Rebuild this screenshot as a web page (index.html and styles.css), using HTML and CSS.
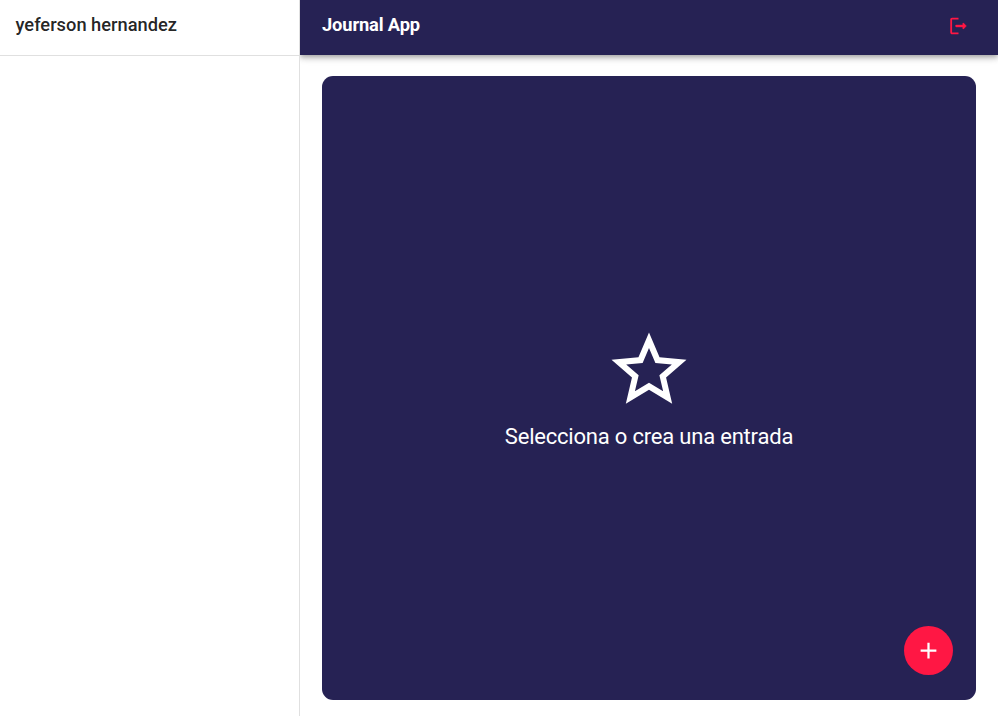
FILE: index.html
```html
<!DOCTYPE html>
<html lang="es">
<head>
<meta charset="utf-8">
<title>Journal App</title>
<link rel="stylesheet" href="styles.css">
</head>
<body>
<div class="app">
  <aside class="sidebar">
    <div class="sidebar-header"><h2 class="user-name">yeferson hernandez</h2></div>
  </aside>
  <div class="content">
    <header class="app-bar">
      <h1 class="title">Journal App</h1>
      <button class="logout" aria-label="Salir">
        <svg viewBox="0 0 24 24"><path d="M5 5h7V3H5c-1.100 0-2 .9-2 2v14c0 1.100.9 2 2 2h7v-2H5V5z"/><path class="arrow" d="m20.300 11.650-2.790-2.790c-.32-.32-.86-.1-.86.35V11h-7c-.55 0-1 .45-1 1s.45 1 1 1h7v1.790c0 .45.540.67.850.35l2.790-2.790c.2-.19.2-.51.010-.7z"/></svg>
      </button>
    </header>
    <main class="main">
      <section class="empty">
        <svg class="star" viewBox="0 0 24 24"><path d="m22 9.240-7.190-.62L12 2 9.190 8.630 2 9.240l5.460 4.730L5.820 21 12 17.270 18.180 21l-1.630-7.030L22 9.240zM12 15.400l-3.760 2.270 1-4.280-3.320-2.880 4.380-.38L12 6.100l1.710 4.040 4.380.38-3.320 2.880 1 4.280L12 15.400z"/></svg>
        <p class="message">Selecciona o crea una entrada</p>
      </section>
    </main>
  </div>
  <button class="fab" aria-label="Nueva entrada">
    <svg viewBox="0 0 24 24"><path d="M19 13h-6v6h-2v-6H5v-2h6V5h2v6h6v2z"/></svg>
  </button>
</div>
</body>
</html>
```
FILE: styles.css
```css
* { box-sizing: border-box; }
body { margin: 0; font-family: Roboto, sans-serif; background: #fff; }
h1, h2, p { margin: 0; }
button { border: 0; padding: 0; cursor: pointer; }
svg { display: block; fill: currentColor; }
.app { display: flex; height: 100vh; overflow: hidden; }
.sidebar { flex: 0 0 300px; border-right: 1px solid #e0e0e0; }
.sidebar-header { height: 56px; padding: 10px 15.500px; border-bottom: 1px solid #e0e0e0; }
.user-name { font-size: 18.300px; line-height: 29px; font-weight: 500; letter-spacing: 0; color: rgba(0,0,0,.87); }
.content { flex: 1; display: flex; flex-direction: column; overflow: hidden; }
.app-bar { flex: 0 0 55px; display: flex; align-items: flex-start; justify-content: space-between; padding: 10px 29px 0 22px; background: #262254; color: #fff; box-shadow: 0 2px 4px -1px rgba(0,0,0,.2), 0 4px 5px rgba(0,0,0,.14), 0 1px 10px rgba(0,0,0,.12); }
.title { font-size: 18.300px; line-height: 29px; font-weight: 700; letter-spacing: -.13px; }
.logout { background: none; color: #ff1744; margin-top: 5px; }
.logout svg { width: 22px; height: 22px; transform: translateX(.5px); }
.arrow { stroke: currentColor; stroke-width: .5; }
.main { flex: 1; display: flex; padding: 21px 22px 16px; }
.empty { flex: 1; display: flex; flex-direction: column; align-items: center; justify-content: center; gap: 7px; padding-top: 1px; background: #262254; border-radius: 11px; color: #fff; }
.star { width: 90px; height: 90px; }
.message { font-size: 22px; line-height: 30px; letter-spacing: -.2px; }
.fab { position: absolute; right: 45px; bottom: 41px; width: 49px; height: 49px; border-radius: 50%; background: #ff1744; color: #fff; display: flex; align-items: center; justify-content: center; }
.fab svg { width: 27px; height: 27px; }
```
